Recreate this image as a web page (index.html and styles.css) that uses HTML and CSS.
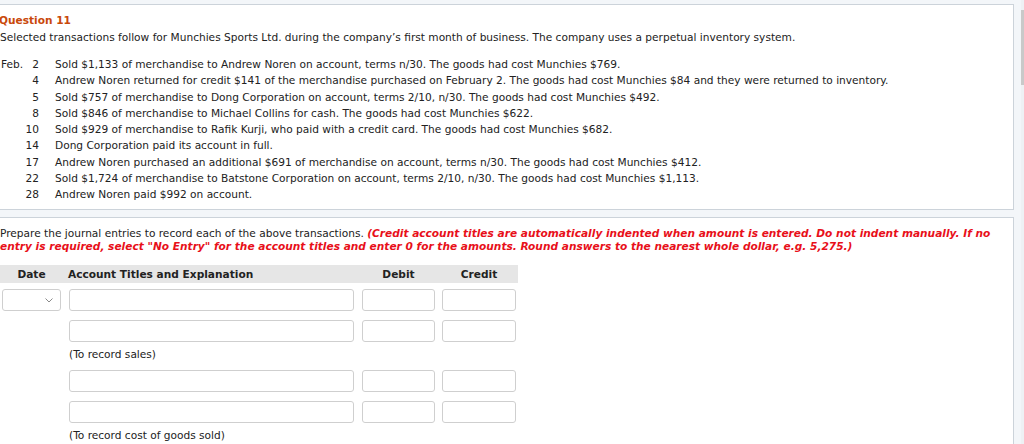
FILE: index.html
```html
<!DOCTYPE html>
<html>
<head>
<meta charset="utf-8">
<link rel="stylesheet" href="styles.css">
</head>
<body>
<div class="page">
  <section class="panel panel-question">
    <h2 class="q-title">Question 11</h2>
    <p class="q-intro">Selected transactions follow for Munchies Sports Ltd. during the company’s first month of business. The company uses a perpetual inventory system.</p>
    <div class="tx-list">
      <div class="tx"><span class="tx-month">Feb.</span><span class="tx-day">2</span><span class="tx-text">Sold $1,133 of merchandise to Andrew Noren on account, terms n/30. The goods had cost Munchies $769.</span></div>
      <div class="tx"><span class="tx-month"></span><span class="tx-day">4</span><span class="tx-text">Andrew Noren returned for credit $141 of the merchandise purchased on February 2. The goods had cost Munchies $84 and they were returned to inventory.</span></div>
      <div class="tx"><span class="tx-month"></span><span class="tx-day">5</span><span class="tx-text">Sold $757 of merchandise to Dong Corporation on account, terms 2/10, n/30. The goods had cost Munchies $492.</span></div>
      <div class="tx"><span class="tx-month"></span><span class="tx-day">8</span><span class="tx-text">Sold $846 of merchandise to Michael Collins for cash. The goods had cost Munchies $622.</span></div>
      <div class="tx"><span class="tx-month"></span><span class="tx-day">10</span><span class="tx-text">Sold $929 of merchandise to Rafik Kurji, who paid with a credit card. The goods had cost Munchies $682.</span></div>
      <div class="tx"><span class="tx-month"></span><span class="tx-day">14</span><span class="tx-text">Dong Corporation paid its account in full.</span></div>
      <div class="tx"><span class="tx-month"></span><span class="tx-day">17</span><span class="tx-text">Andrew Noren purchased an additional $691 of merchandise on account, terms n/30. The goods had cost Munchies $412.</span></div>
      <div class="tx"><span class="tx-month"></span><span class="tx-day">22</span><span class="tx-text">Sold $1,724 of merchandise to Batstone Corporation on account, terms 2/10, n/30. The goods had cost Munchies $1,113.</span></div>
      <div class="tx"><span class="tx-month"></span><span class="tx-day">28</span><span class="tx-text">Andrew Noren paid $992 on account.</span></div>
    </div>
  </section>

  <section class="panel panel-answer">
    <p class="instructions">Prepare the journal entries to record each of the above transactions. <em class="warn">(Credit account titles are automatically indented when amount is entered. Do not indent manually. If no entry is required, select "No Entry" for the account titles and enter 0 for the amounts. Round answers to the nearest whole dollar, e.g. 5,275.)</em></p>

    <div class="journal">
      <div class="j-head">
        <div class="h-date">Date</div>
        <div class="h-acct">Account Titles and Explanation</div>
        <div class="h-num">Debit</div>
        <div class="h-num">Credit</div>
      </div>

      <div class="j-row">
        <div class="select"><svg class="chev" width="8" height="5" viewBox="0 0 8 5"><path d="M0.5 0.5 L4 4 L7.5 0.5" fill="none" stroke="#8a8a8a" stroke-width="1"/></svg></div>
        <div class="field"></div>
        <div class="field"></div>
        <div class="field"></div>
      </div>
      <div class="j-row">
        <div></div>
        <div class="field"></div>
        <div class="field"></div>
        <div class="field"></div>
      </div>
      <div class="j-note"><div></div><div class="note">(To record sales)</div></div>

      <div class="j-row">
        <div></div>
        <div class="field"></div>
        <div class="field"></div>
        <div class="field"></div>
      </div>
      <div class="j-row">
        <div></div>
        <div class="field"></div>
        <div class="field"></div>
        <div class="field"></div>
      </div>
      <div class="j-note"><div></div><div class="note">(To record cost of goods sold)</div></div>
    </div>
  </section>
</div>
<div class="scrollbar"><div class="thumb"></div></div>
</body>
</html>
```

FILE: styles.css
```css
html, body {
  margin: 0;
  padding: 0;
}
body {
  background: #f3f6f9;
  font-family: "DejaVu Sans", Verdana, sans-serif;
  font-size: 10.6px;
  color: #222;
  overflow: hidden;
}
.page {
  padding: 4px 10px 0 0;
  margin-left: -12px;
  display: flex;
  flex-direction: column;
  gap: 7px;
}
.panel {
  background: #fff;
  border: 1px solid #ccd3da;
  padding-left: 11px;
}
.panel-question {
  padding-top: 7px;
  padding-bottom: 7px;
}
.q-title {
  margin: 0 0 0 -1px;
  font-size: 10.6px;
  font-weight: bold;
  line-height: 17px;
  color: #c9490b;
}
.q-intro {
  margin: 0;
  line-height: 17px;
}
.tx-list {
  margin-top: 10px;
  display: flex;
  flex-direction: column;
}
.tx {
  display: flex;
  line-height: 16.25px;
  height: 16.25px;
  white-space: nowrap;
}
.tx-month {
  flex: none;
  width: 22px;
  padding-left: 1px;
}
.tx-day {
  flex: none;
  width: 16px;
  text-align: right;
}
.tx-text {
  flex: none;
  padding-left: 16px;
}
.panel-answer {
  padding-top: 9px;
  padding-bottom: 20px;
}
.instructions {
  margin: 0;
  line-height: 13px;
  padding-right: 14px;
}
.warn {
  color: #e8101a;
  font-weight: bold;
  font-style: italic;
}
.journal {
  margin-top: 12px;
  width: 518px;
}
.j-head, .j-row, .j-note {
  display: grid;
  grid-template-columns: 59px 8px 285px 8px 73px 7px 74px;
  padding-left: 2px;
}
.j-head > :nth-child(2), .j-row > :nth-child(2), .j-note > :nth-child(2) { grid-column: 3; }
.j-head > :nth-child(3), .j-row > :nth-child(3) { grid-column: 5; }
.j-head > :nth-child(4), .j-row > :nth-child(4) { grid-column: 7; }
.j-head {
  background: #e6e6e6;
  height: 18px;
  line-height: 18px;
  font-weight: bold;
  margin-bottom: 6px;
}
.h-date, .h-num {
  text-align: center;
}
.h-acct {
  margin-left: -1px;
}
.j-row {
  margin-bottom: 9px;
}
.field, .select {
  height: 20px;
  border: 1px solid #cfcfcf;
  border-radius: 3px;
  background: #fff;
}
.select {
  position: relative;
}
.chev {
  position: absolute;
  right: 7px;
  top: 8px;
}
.j-note {
  margin-top: -5px;
  margin-bottom: 8px;
  line-height: 16px;
}
.note {
  color: #222;
}
.scrollbar {
  position: fixed;
  right: 0;
  top: 0;
  width: 3px;
  height: 444px;
  background: #eef1f4;
}
.thumb {
  margin-top: 10px;
  height: 75px;
  background: #c9c9c9;
}
```
